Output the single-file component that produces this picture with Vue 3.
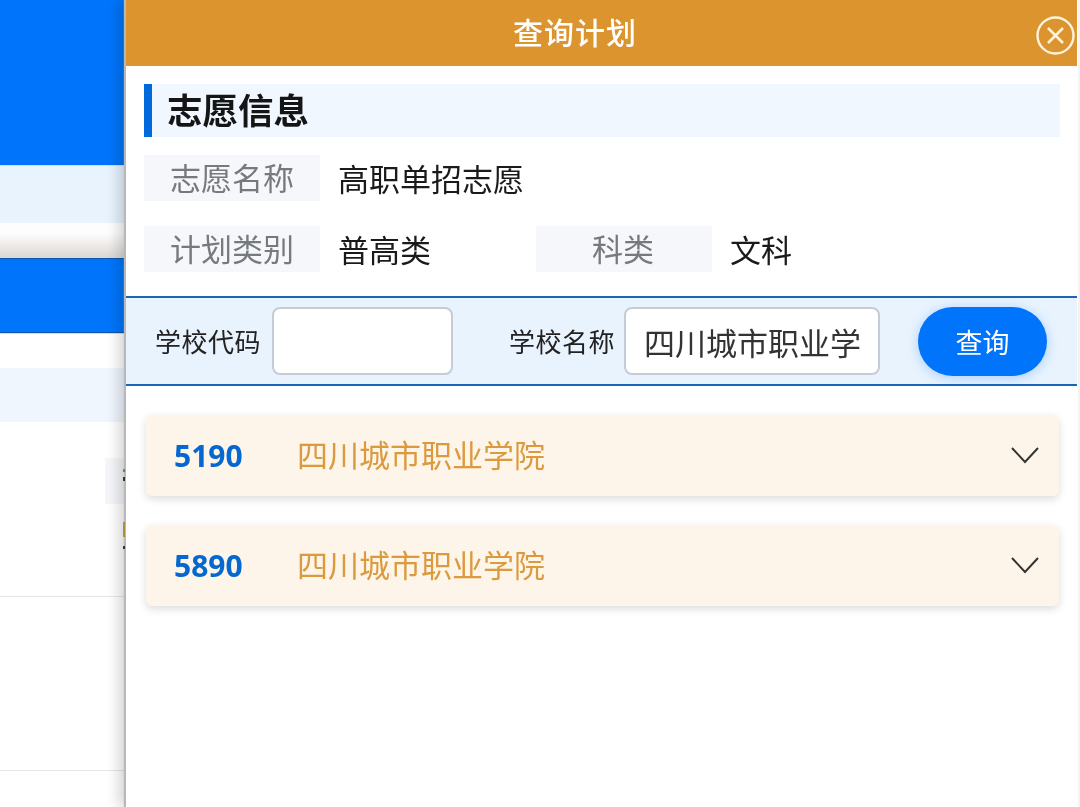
<script setup>
const schools = [
  { code: '5190', name: '四川城市职业学院' },
  { code: '5890', name: '四川城市职业学院' },
]
</script>

<template>
  <div class="page">
    <aside class="behind">
      <div class="b-hero"></div>
      <div class="b-tint"></div>
      <div class="b-gap"></div>
      <div class="b-bar"></div>
      <div class="b-space"></div>
      <div class="b-tint2"></div>
      <div class="b-rows">
        <div class="b-chip"></div>
        <i class="b-mark m1"></i>
        <i class="b-mark m2"></i>
        <i class="b-mark m3"></i>
        <i class="b-mark m4"></i>
        <div class="b-line first"></div>
        <div class="b-line second"></div>
      </div>
    </aside>

    <main class="panel">
      <header class="head">
        <h1 class="title">查询计划</h1>
        <button class="close" aria-label="关闭">
          <svg width="39" height="39" viewBox="0 0 39 39" fill="none" stroke="#fff3dc">
            <circle cx="19.5" cy="19.5" r="18" stroke-width="2.4" />
            <path d="M12 12 27 27M27 12 12 27" stroke-width="2.6" />
          </svg>
        </button>
      </header>

      <section class="info">
        <h2 class="section">志愿信息</h2>
        <div class="row">
          <span class="label">志愿名称</span>
          <span class="value">高职单招志愿</span>
        </div>
        <div class="row">
          <span class="label">计划类别</span>
          <span class="value fixed">普高类</span>
          <span class="label center">科类</span>
          <span class="value">文科</span>
        </div>
      </section>

      <form class="search" @submit.prevent>
        <label class="s-label">学校代码</label>
        <input class="s-input code" type="text" />
        <label class="s-label name-label">学校名称</label>
        <input class="s-input name" type="text" value="四川城市职业学院" />
        <button class="s-btn" type="submit">查询</button>
      </form>

      <div class="list">
        <div v-for="s in schools" :key="s.code" class="card">
          <span class="code-text">{{ s.code }}</span>
          <span class="name-text">{{ s.name }}</span>
          <svg class="chev" width="30" height="19" viewBox="0 0 30 19" fill="none" stroke="#333" stroke-width="2">
            <path d="M2 2 15 16 28 2" />
          </svg>
        </div>
      </div>
    </main>
  </div>
</template>

<style>
html, body { margin: 0; background: #fff; }
</style>

<style scoped>
.page {
  display: flex;
  width: 1080px;
  height: 807px;
  overflow: hidden;
  font-family: "Noto Sans", "Noto Sans CJK SC", sans-serif;
  background: #fff;
  filter: blur(0.55px);
}

/* page showing behind the drawer */
.behind {
  width: 126px;
  flex: none;
  display: flex;
  flex-direction: column;
}
.b-hero { height: 165px; background: #0075fb; }
.b-tint { height: 58px; background: #e8f3fe; border-top: 1px solid #c4e2ff; box-sizing: border-box; }
.b-gap { height: 35px; background: linear-gradient(#fdfdfd 30%, #ddd9d6 95%); }
.b-bar {
  height: 75px;
  background: #0075fb;
  box-shadow: inset 0 1px 0 #0a58b0, inset 0 -1px 0 #0a58b0, 0 1px 0 #bfe0ff, 0 -1px 0 #bfe0ff;
}
.b-space { height: 35px; }
.b-tint2 { height: 54px; background: #f0f6fe; }
.b-rows { position: relative; flex: 1; }
.b-chip { position: absolute; left: 105px; top: 36px; width: 21px; height: 46px; background: #f5f6f9; }
.b-line { position: absolute; left: 0; right: 0; height: 1px; background: #e6e6e6; }
.b-line.first { top: 174px; }
.b-line.second { top: 348px; }
.b-mark { position: absolute; left: 123px; width: 2px; height: 3px; background: #333; z-index: 2; }
.b-mark.m1 { top: 47px; background: #777; }
.b-mark.m2 { top: 55px; height: 4px; }
.b-mark.m3 { top: 100px; height: 15px; background: #b48a3c; }
.b-mark.m4 { top: 124px; }

/* drawer */
.panel {
  position: relative;
  flex: 1;
  min-width: 0;
  box-sizing: border-box;
  padding-right: 3px;
  background: #fff;
  box-shadow: -2px 0 1px #b8b8b8, -8px 0 12px rgba(0, 0, 0, 0.16), inset -2px 0 0 #f3f3f3;
}
.head {
  height: 66px;
  background: #dc942e;
  display: flex;
  align-items: center;
  justify-content: center;
  padding-right: 53px;
  position: relative;
}
.title {
  margin: 0;
  font-size: 30px;
  font-weight: 500;
  letter-spacing: 1px;
  color: #fff;
  line-height: 66px;
}
.close {
  position: absolute;
  right: 2px;
  top: 16px;
  width: 39px;
  height: 39px;
  padding: 0;
  border: 0;
  background: none;
  display: block;
}
.close svg { display: block; }

.info { padding: 18px 17px 0 18px; }
.section {
  margin: 0 0 18px;
  height: 53px;
  line-height: 53px;
  background: #f0f7ff;
  border-left: 8px solid #0069dc;
  padding-left: 15px;
  font-size: 35.5px;
  font-weight: 700;
  color: #151515;
}
.row {
  display: flex;
  align-items: center;
  height: 46px;
  margin-bottom: 25px;
}
.label {
  width: 176px;
  height: 46px;
  line-height: 46px;
  box-sizing: border-box;
  padding-left: 26px;
  background: #f5f7fa;
  color: #777a7d;
  font-size: 31px;
  flex: none;
}
.label.center { padding-left: 0; padding-right: 2px; text-align: center; }
.value {
  margin-left: 18px;
  padding-bottom: 2px;
  font-size: 31px;
  color: #1a1a1a;
}
.value.fixed { width: 198px; flex: none; }

.search {
  display: flex;
  align-items: center;
  height: 90px;
  margin-top: -1px;
  box-sizing: border-box;
  padding-left: 29px;
  background: #e8f3fe;
  border-top: 2px solid #1b66b4;
  border-bottom: 2px solid #1b66b4;
}
.s-label { font-size: 26px; letter-spacing: 0.5px; color: #222; flex: none; }
.s-input {
  height: 68px;
  box-sizing: border-box;
  border: 2px solid #c6ccd4;
  border-radius: 8px;
  background: #fff;
  outline: none;
  font-family: inherit;
  font-size: 31px;
  color: #333;
  padding: 0 18px;
}
.s-input.code { width: 181px; margin-left: 11px; }
.name-label { margin-left: 56px; }
.s-input.name { width: 256px; margin-left: 9px; }
.s-btn {
  width: 129px;
  height: 69px;
  margin-left: 38px;
  border: 0;
  border-radius: 35px;
  background: #0075fb;
  color: #fff;
  font-family: inherit;
  font-size: 27px;
  box-shadow: 0 2px 12px rgba(0, 117, 251, 0.28);
}

.list {
  padding: 29px 18px 0 20px;
  display: flex;
  flex-direction: column;
  gap: 29px;
}
.card {
  height: 81px;
  box-sizing: border-box;
  display: flex;
  align-items: center;
  padding-left: 28px;
  border-radius: 6px;
  background: #fdf5ea;
  box-shadow: 0 3px 8px rgba(0, 0, 0, 0.14);
}
.code-text {
  width: 123px;
  flex: none;
  font-size: 30px;
  font-weight: 700;
  color: #0468d0;
}
.name-text { padding-bottom: 4px; font-size: 31px; color: #dc9a3e; }
.chev { margin-left: auto; margin-right: 19px; margin-top: -1px; }
</style>
